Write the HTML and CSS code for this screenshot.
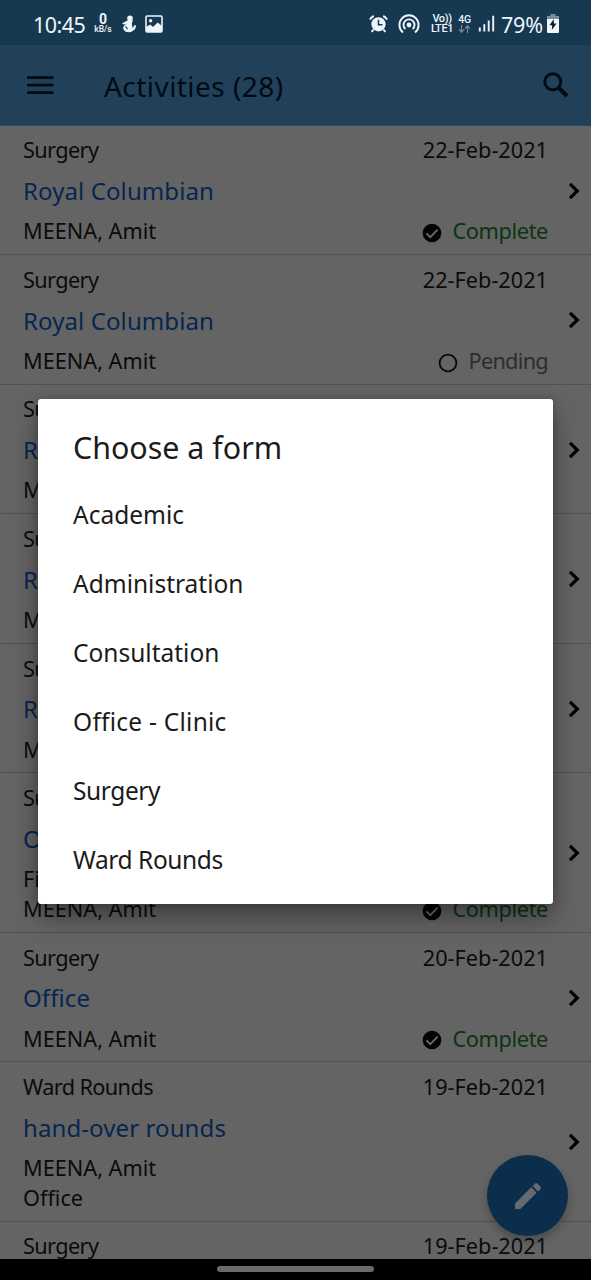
FILE: index.html
```html
<!DOCTYPE html>
<html lang="en">
<head>
<meta charset="utf-8">
<title>Activities</title>
<link rel="stylesheet" href="styles.css">
</head>
<body>
<svg class="defs" width="0" height="0" aria-hidden="true">
  <symbol id="chevron" viewBox="0 0 12 18"><path d="M2 1.8 9.3 9 2 16.2" fill="none" stroke="#020202" stroke-width="3.2"/></symbol>
  <symbol id="done" viewBox="0 0 20 20"><circle cx="10" cy="10" r="9.3" fill="#040404"/><path d="M4.4 10.3 8.3 14.2 15.6 6.6" fill="none" stroke="#6a6a6a" stroke-width="1.9"/></symbol>
  <symbol id="open" viewBox="0 0 20 20"><circle cx="10" cy="10" r="8.4" fill="none" stroke="#080808" stroke-width="1.8"/></symbol>
</svg>
<div class="screen">
  <div class="status-bar">
    <div class="status-left">
      <span class="clock">10:45</span>
      <span class="speed"><b>0</b><small>kB/s</small></span>
      <svg class="figure" width="16" height="18" viewBox="0 0 16 18"><g fill="#eef5fb"><circle cx="9" cy="3.2" r="2.8"/><path d="M7.2 5 1 8.4l2 1.2 3.2-1.2C3.4 9.8 2 11.6 2.2 13.5 2.6 16 5 17.3 8 17.2c4.2-.2 7.3-3.2 7-6.9l-1.9.3c-.3 1.3-.9 1.9-1.7 2.3.4-2.4-1.1-3.3-.3-5.4L12 5.2z"/></g><path d="M4.6 11.4 6.6 14.2" stroke="#163850" stroke-width="1.1"/></svg>
      <svg class="picture" width="18" height="18" viewBox="0 0 18 18"><rect x="1" y="1" width="16" height="16" rx="1.2" fill="none" stroke="#eef5fb" stroke-width="1.6"/><circle cx="5.6" cy="5.8" r="1.7" fill="#eef5fb"/><path d="M1 12 5.2 9.4 8 12l4.7-4.6L17 11v6H1z" fill="#eef5fb"/></svg>
    </div>
    <div class="status-right">
      <svg class="alarm" width="19" height="18" viewBox="0 0 19 18"><g fill="none" stroke="#eef5fb" stroke-width="2"><path d="M1 4.7C1.7 3 3 1.8 4.8 1M14.2 1c1.8.8 3.1 2 3.8 3.7M4.5 14.5 2.7 17M14.5 14.5 16.3 17"/></g><circle cx="9.5" cy="9.3" r="7.1" fill="#eef5fb"/><path d="M9.5 4.8v5h4" fill="none" stroke="#163850" stroke-width="1.5"/></svg>
      <svg class="hotspot" width="22" height="20" viewBox="0 0 22 20"><g fill="none" stroke="#eef5fb" stroke-width="1.9"><path d="M5 18.4A9.6 9.6 0 1 1 17 18.4"/><path d="M7.4 15A5.5 5.5 0 1 1 14.6 15"/></g><circle cx="11" cy="11" r="2.4" fill="#eef5fb"/></svg>
      <span class="lte"><span>Vo))</span><span>LTE1</span></span>
      <span class="data"><span>4G</span><svg width="13" height="8" viewBox="0 0 13 8"><path d="M3.5 0v7M1 4.3l2.5 2.9L6 4.3M9.5 8V1M7 3.7 9.5.8 12 3.7" fill="none" stroke="#7389a0" stroke-width="1.2"/></svg></span>
      <svg class="signal" width="17" height="17" viewBox="0 0 17 17"><path d="M1.8 16.5v-4M6.3 16.5V9.2M10.7 16.5V5.5M15.2 16.5V.8" stroke="#eef5fb" stroke-width="1.9"/></svg>
      <span class="percent">79%</span>
      <svg class="battery" width="12" height="19" viewBox="0 0 12 19"><path d="M3.5 0h5v2H12v4H0V2h3.5z" fill="#788da0"/><path d="M0 5h12v13a1 1 0 0 1-1 1H1a1 1 0 0 1-1-1z" fill="#eef5fb"/><path d="M6.8 5 2.5 11.2h2.7L4.8 16 9.5 9.5H6.8z" fill="#101820"/></svg>
    </div>
  </div>

  <header class="app-bar">
    <svg class="menu" width="27" height="18" viewBox="0 0 27 18"><path d="M0 1.6h26.5M0 9.1h26.5M0 16.6h26.5" stroke="#020a12" stroke-width="2.8"/></svg>
    <h1>Activities (28)</h1>
    <svg class="search" width="26" height="26" viewBox="0 0 26 26"><circle cx="9.8" cy="9.8" r="8" fill="none" stroke="#020a12" stroke-width="3"/><path d="M15.5 15.5 24 24" stroke="#020a12" stroke-width="4"/></svg>
  </header>

  <main class="list">
    <article class="row">
      <div class="info"><p class="kind">Surgery</p><h2>Royal Columbian</h2><p>MEENA, Amit</p></div>
      <div class="meta"><time>22-Feb-2021</time><p class="state complete"><svg><use href="#done"/></svg>Complete</p></div>
      <svg class="chevron"><use href="#chevron"/></svg>
    </article>
    <article class="row">
      <div class="info"><p class="kind">Surgery</p><h2>Royal Columbian</h2><p>MEENA, Amit</p></div>
      <div class="meta"><time>22-Feb-2021</time><p class="state pending"><svg><use href="#open"/></svg>Pending</p></div>
      <svg class="chevron"><use href="#chevron"/></svg>
    </article>
    <article class="row">
      <div class="info"><p class="kind">Surgery</p><h2>Royal Columbian</h2><p>MEENA, Amit</p></div>
      <svg class="chevron"><use href="#chevron"/></svg>
    </article>
    <article class="row">
      <div class="info"><p class="kind">Surgery</p><h2>Royal Columbian</h2><p>MEENA, Amit</p></div>
      <svg class="chevron"><use href="#chevron"/></svg>
    </article>
    <article class="row">
      <div class="info"><p class="kind">Surgery</p><h2>Royal Columbian</h2><p>MEENA, Amit</p></div>
      <svg class="chevron"><use href="#chevron"/></svg>
    </article>
    <article class="row">
      <div class="info"><p class="kind">Surgery</p><h2>Office</h2><p>First</p><p>MEENA, Amit</p></div>
      <div class="meta"><p class="state complete"><svg><use href="#done"/></svg>Complete</p></div>
      <svg class="chevron"><use href="#chevron"/></svg>
    </article>
    <article class="row">
      <div class="info"><p class="kind">Surgery</p><h2>Office</h2><p>MEENA, Amit</p></div>
      <div class="meta"><time>20-Feb-2021</time><p class="state complete"><svg><use href="#done"/></svg>Complete</p></div>
      <svg class="chevron"><use href="#chevron"/></svg>
    </article>
    <article class="row">
      <div class="info"><p class="kind">Ward Rounds</p><h2>hand-over rounds</h2><p>MEENA, Amit</p><p>Office</p></div>
      <div class="meta"><time>19-Feb-2021</time></div>
      <svg class="chevron"><use href="#chevron"/></svg>
    </article>
    <article class="row">
      <div class="info"><p class="kind">Surgery</p></div>
      <div class="meta"><time>19-Feb-2021</time></div>
      <span class="chevron"></span>
    </article>
  </main>

  <div class="nav-bar"><span class="handle"></span></div>

  <div class="fab"><svg width="28" height="28" viewBox="0 0 28 28"><path d="M1 21.5 17.2 5.3l5.4 5.4L6.4 27H1zM18.6 3.9l2.2-2.2a2 2 0 0 1 2.8 0l2.7 2.7a2 2 0 0 1 0 2.8L24 9.4z" fill="#666a70"/></svg></div>

  <section class="dialog">
    <h2>Choose a form</h2>
    <ul>
      <li>Academic</li>
      <li>Administration</li>
      <li>Consultation</li>
      <li class="wide">Office - Clinic</li>
      <li class="snug">Surgery</li>
      <li class="snug">Ward Rounds</li>
    </ul>
  </section>
</div>
</body>
</html>
```
FILE: styles.css
```css
* { box-sizing: border-box; }
body { margin: 0; font-family: "Noto Sans", "Open Sans", sans-serif; font-variant-ligatures: none; }
h1, h2, p, ul { margin: 0; padding: 0; font-weight: 400; }
svg { flex: none; display: block; }
.defs { position: absolute; }

.screen {
  position: relative;
  display: flex;
  flex-direction: column;
  width: 591px;
  height: 1280px;
  overflow: hidden;
  background: #646464;
}

/* Status bar */
.status-bar {
  flex: none;
  display: flex;
  justify-content: space-between;
  height: 45px;
  padding: 2px 32px 0 33px;
  background: #163850;
  color: #eef5fb;
}
.status-left, .status-right { display: flex; align-items: center; }
.clock { width: 52px; padding-top: 1px; font-size: 21.5px; letter-spacing: -0.55px; }
.speed { display: flex; flex-direction: column; align-items: center; width: 18px; margin-left: 9px; }
.speed b { font: 700 14px/12px Roboto, sans-serif; }
.speed small { font: 500 8.5px/9px Roboto, sans-serif; }
.figure { margin-left: 9px; }
.picture { margin-left: 8px; }
.hotspot { margin-left: 10px; }
.lte { display: flex; flex-direction: column; width: 22px; margin-left: 11px; font: 500 11px/10px Roboto, sans-serif; letter-spacing: -0.4px; align-items: center; }
.data { display: flex; flex-direction: column; align-items: center; width: 13px; margin-left: 5px; font: 500 10.5px/11px Roboto, sans-serif; letter-spacing: -0.3px; }
.signal { margin-left: 7px; }
.percent { width: 44px; margin-left: 6px; padding-top: 1px; font-size: 21.5px; letter-spacing: -0.2px; white-space: nowrap; }
.battery { margin-left: 2px; }

/* App bar */
.app-bar {
  flex: none;
  display: flex;
  align-items: center;
  height: 81px;
  padding: 0 22px 0 27px;
  background: #21415b;
  border-bottom: 1px solid #2c4a63;
  color: #020a12;
}
.app-bar h1 { flex: 1; margin-left: 50px; padding-top: 2px; font-size: 28px; line-height: 40px; letter-spacing: 0.45px; }

/* Activity list */
.list { flex: 1; min-height: 0; margin-top: -0.6px; overflow: hidden; font-size: 21.7px; line-height: 29.7px; color: #0b0b0b; }
.row {
  display: flex;
  padding: 9.9px 11px 8px 23px;
  border-bottom: 1px solid #525252;
}
.info { flex: 1; }
.info h2 { font-size: 24px; line-height: 51.3px; letter-spacing: 0.1px; color: #062650; }
.kind { letter-spacing: -0.6px; }
.meta { display: flex; flex-direction: column; align-items: flex-end; margin-right: 20px; }
.state { display: flex; align-items: center; margin-top: auto; gap: 10px; letter-spacing: -0.35px; }
.state svg { width: 20px; height: 20px; margin-top: 4px; }
.complete { color: #0b3413; }
.pending { color: #2d2d2d; letter-spacing: -0.7px; }
.chevron { flex: none; align-self: center; width: 12px; height: 18px; }

/* System navigation */
.nav-bar { flex: none; display: flex; justify-content: center; height: 21px; padding-top: 7px; background: #000; }
.handle { width: 157px; height: 6px; border-radius: 3px; background: #6a6a6a; }

.fab {
  position: absolute;
  right: 23px;
  bottom: 44px;
  display: flex;
  align-items: center;
  justify-content: center;
  width: 81px;
  height: 81px;
  border-radius: 50%;
  background: #0a2e4c;
  box-shadow: 0 5px 10px rgba(0, 0, 0, 0.25);
}

/* Form chooser */
.dialog {
  position: absolute;
  left: 38px;
  top: 399px;
  width: 515px;
  height: 505px;
  padding: 25px 35px 0;
  border-radius: 3px;
  background: #fff;
  color: #1b1b1b;
  box-shadow: 0 14px 26px rgba(0, 0, 0, 0.36), 0 0 10px rgba(0, 0, 0, 0.2);
}
.dialog h2 { height: 56px; font-size: 30.4px; line-height: 48px; }
.dialog ul { list-style: none; }
.dialog li { height: 69px; font-size: 24.5px; line-height: 69px; }
.dialog .wide { letter-spacing: 0.25px; }
.dialog .snug { letter-spacing: -0.4px; }
```
